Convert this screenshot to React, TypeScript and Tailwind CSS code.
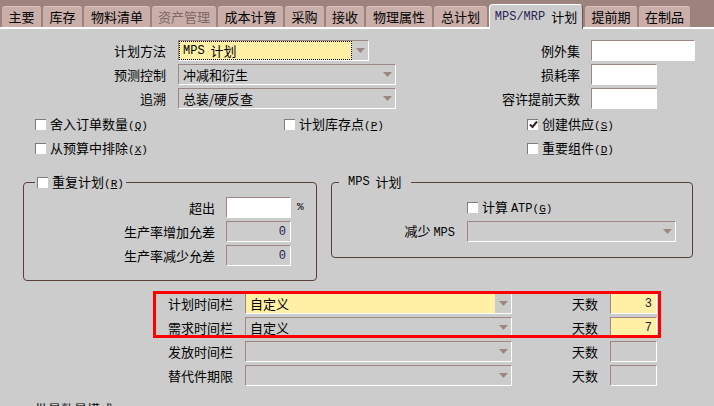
import React from "react";

const cjk = "font-['Noto_Sans_CJK_SC','Noto_Sans',sans-serif]";
const mono = "font-['Liberation_Mono',monospace]";

const tabs: { label: React.ReactNode; w: string; active?: boolean; disabled?: boolean }[] = [
  { label: "主要", w: "w-[39px]" },
  { label: "库存", w: "w-[39px]" },
  { label: "物料清单", w: "w-[66px]" },
  { label: "资产管理", w: "w-[64px]", disabled: true },
  { label: "成本计算", w: "w-[65px]" },
  { label: "采购", w: "w-[39px]" },
  { label: "接收", w: "w-[38px]" },
  { label: "物理属性", w: "w-[66px]" },
  { label: "总计划", w: "w-[53px]" },
  {
    label: (
      <>
        <span className={`${mono} text-[12px] text-[#2a1f55]`}>MPS/MRP</span>
        <span className="ml-[6px]">计划</span>
      </>
    ),
    w: "w-[94px]",
    active: true,
  },
  { label: "提前期", w: "w-[52px]" },
  { label: "在制品", w: "w-[51px]" },
];

const sunken = "border border-t-[#9e8682] border-l-[#9e8682] border-b-white border-r-white";

const Arrow = () => (
  <svg width="9" height="5" viewBox="0 0 9 5">
    <path d="M0 0h9L4.5 5z" fill="#9e8682" />
  </svg>
);

interface SelectProps {
  w: string;
  value?: React.ReactNode;
  yellow?: boolean;
  focus?: boolean;
}

const Select = ({ w, value, yellow, focus }: SelectProps) => (
  <div className={`${w} h-[21px] flex ${sunken}`}>
    <div
      className={`flex-1 flex items-center pl-[4px] text-[13px] ${yellow ? "bg-[#fff0a5]" : ""} ${
        focus ? "outline outline-1 outline-dotted outline-black -outline-offset-1" : ""
      }`}
    >
      {value}
    </div>
    <div className="w-[16px] flex items-center justify-center">
      <Arrow />
    </div>
  </div>
);

interface InputProps {
  w: string;
  value?: string;
  white?: boolean;
  yellow?: boolean;
}

const Input = ({ w, value, white, yellow }: InputProps) => (
  <div
    className={`${w} h-[21px] flex items-center justify-end pr-[4px] text-[13px] ${sunken} ${
      white ? "bg-white" : yellow ? "bg-[#fff0a5]" : ""
    }`}
  >
    {value && <span className={`${mono} text-[12px] text-[#231a4a]`}>{value}</span>}
  </div>
);

const Check = ({ checked }: { checked?: boolean }) => (
  <span className="w-[11px] h-[11px] shrink-0 bg-white border-t border-l border-[#7c7c7c] flex items-center justify-center">
    {checked && (
      <svg width="9" height="9" viewBox="0 0 9 9">
        <path d="M1 4.5 L3.5 7 L8 1.5" stroke="#3a2420" strokeWidth="2" fill="none" />
      </svg>
    )}
  </span>
);

const Key = ({ k }: { k: string }) => (
  <span className={`${mono} text-[11px]`}>
    (<u>{k}</u>)
  </span>
);

const CheckItem = ({ label, k, checked }: { label: string; k: string; checked?: boolean }) => (
  <div className="flex items-center h-[16px] gap-[4px] text-[13px]">
    <Check checked={checked} />
    <span>
      {label}
      <Key k={k} />
    </span>
  </div>
);

export default function App() {
  return (
    <div className={`w-[714px] h-[406px] overflow-hidden bg-[#cccccc] text-black ${cjk}`}>
      {/* tab strip */}
      <div className="h-[29px] bg-[#9d837d] flex items-end gap-[2px] pl-[2px] border-b-2 border-white">
        {tabs.map((t, i) =>
          t.active ? (
            <div
              key={i}
              className={`${t.w} h-[25px] -mb-[2px] bg-[#cccccc] rounded-t-[4px] border-t border-l border-white border-r border-r-[#6d5752] flex items-center justify-center text-[13px]`}
            >
              {t.label}
            </div>
          ) : (
            <div
              key={i}
              className={`${t.w} h-[21px] bg-[#c9aeaa] rounded-t-[3px] border-t border-[#d8c2be] flex items-center justify-center text-[13px] ${
                t.disabled ? "text-[#7d6a66]" : ""
              }`}
            >
              {t.label}
            </div>
          )
        )}
      </div>

      {/* top fields */}
      <div className="flex mt-[11px]">
        <div className="w-[396px] flex flex-col gap-[3px]">
          <div className="flex items-center">
            <span className="w-[166px] text-right text-[13px]">计划方法</span>
            <div className="ml-[12px]">
              <Select
                w="w-[191px]"
                yellow
                focus
                value={
                  <>
                    <span className={`${mono} text-[12px]`}>MPS</span>
                    <span className="ml-[6px]">计划</span>
                  </>
                }
              />
            </div>
          </div>
          <div className="flex items-center">
            <span className="w-[166px] text-right text-[13px]">预测控制</span>
            <div className="ml-[12px]">
              <Select w="w-[218px]" value="冲减和衍生" />
            </div>
          </div>
          <div className="flex items-center">
            <span className="w-[166px] text-right text-[13px]">追溯</span>
            <div className="ml-[12px]">
              <Select w="w-[218px]" value="总装/硬反查" />
            </div>
          </div>
        </div>
        <div className="flex flex-col gap-[3px]">
          <div className="flex items-center">
            <span className="w-[184px] text-right text-[13px]">例外集</span>
            <div className="ml-[11px]">
              <Input w="w-[104px]" white />
            </div>
          </div>
          <div className="flex items-center">
            <span className="w-[184px] text-right text-[13px]">损耗率</span>
            <div className="ml-[11px]">
              <Input w="w-[66px]" white />
            </div>
          </div>
          <div className="flex items-center">
            <span className="w-[184px] text-right text-[13px]">容许提前天数</span>
            <div className="ml-[11px]">
              <Input w="w-[66px]" white />
            </div>
          </div>
        </div>
      </div>

      {/* checkboxes */}
      <div className="grid grid-cols-[249px_243px_1fr] gap-y-[8px] pl-[35px] mt-[7px]">
        <CheckItem label="舍入订单数量" k="Q" />
        <CheckItem label="计划库存点" k="P" />
        <CheckItem label="创建供应" k="S" checked />
        <CheckItem label="从预算中排除" k="X" />
        <div />
        <CheckItem label="重要组件" k="D" />
      </div>

      {/* group boxes */}
      <div className="flex items-start gap-[14px] pl-[23px] mt-[26px]">
        <div className="relative w-[294px] h-[99px] border border-[#5b4039] rounded-[4px] pt-[14px]">
          <div className="absolute -top-[9px] left-[11px] bg-[#cccccc] px-[2px]">
            <CheckItem label="重复计划" k="R" />
          </div>
          <div className="flex flex-col gap-[3px]">
            <div className="flex items-center">
              <span className="w-[191px] text-right text-[13px]">超出</span>
              <div className="ml-[11px]">
                <Input w="w-[65px]" white />
              </div>
              <span className={`${mono} text-[11px] ml-[6px]`}>%</span>
            </div>
            <div className="flex items-center">
              <span className="w-[191px] text-right text-[13px]">生产率增加允差</span>
              <div className="ml-[11px]">
                <Input w="w-[65px]" value="0" />
              </div>
            </div>
            <div className="flex items-center">
              <span className="w-[191px] text-right text-[13px]">生产率减少允差</span>
              <div className="ml-[11px]">
                <Input w="w-[65px]" value="0" />
              </div>
            </div>
          </div>
        </div>

        <div className="relative w-[362px] h-[76px] border border-[#5b4039] rounded-[4px] pt-[16px]">
          <div className="absolute -top-[9px] left-[7px] bg-[#cccccc] px-[9px] h-[16px] flex items-center text-[13px]">
            <span className={`${mono} text-[12px]`}>MPS</span>
            <span className="ml-[6px]">计划</span>
          </div>
          <div className="pl-[135px]">
            <div className="flex items-center h-[16px] gap-[4px] text-[13px]">
              <Check />
              <span>
                计算 <span className={`${mono} text-[12px]`}>ATP</span>
                <Key k="G" />
              </span>
            </div>
          </div>
          <div className="flex items-center mt-[6px]">
            <span className="w-[123px] text-right text-[13px]">
              减少 <span className={`${mono} text-[12px]`}>MPS</span>
            </span>
            <div className="ml-[12px]">
              <Select w="w-[209px]" />
            </div>
          </div>
        </div>
      </div>

      {/* time fences */}
      <div className="relative flex flex-col gap-[3px] mt-[12px]">
        {[
          { label: "计划时间栏", value: "自定义", days: "3", yellow: true },
          { label: "需求时间栏", value: "自定义", days: "7", yellow: false, dayYellow: true },
          { label: "发放时间栏" },
          { label: "替代件期限" },
        ].map((r: any) => (
          <div key={r.label} className="flex items-center">
            <span className="w-[233px] text-right text-[13px]">{r.label}</span>
            <div className="ml-[12px]">
              <Select w="w-[267px]" value={r.value} yellow={r.yellow} />
            </div>
            <span className="w-[86px] text-right text-[13px]">天数</span>
            <div className="ml-[12px]">
              <Input w="w-[47px]" value={r.days} yellow={r.yellow || r.dayYellow} />
            </div>
          </div>
        ))}
        <div className="absolute -top-[2px] left-[153px] w-[508px] h-[47px] border-[3px] border-[#ff0000] pointer-events-none" />
      </div>

      <div className="pl-[35px] mt-[15px] text-[13px] leading-[16px]">批量数量模式</div>
    </div>
  );
}
